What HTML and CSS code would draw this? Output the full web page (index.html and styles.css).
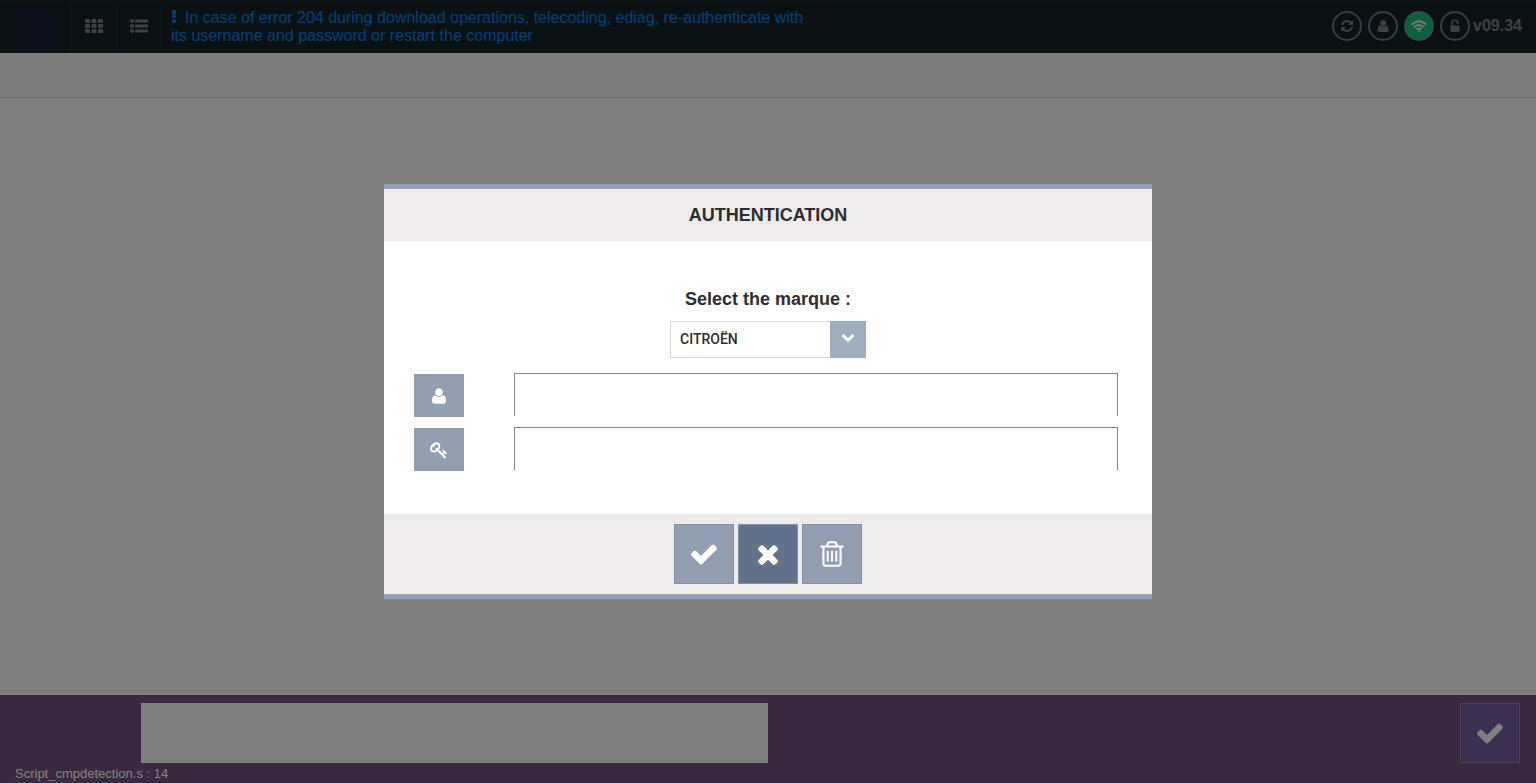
FILE: index.html
```html
<!DOCTYPE html>
<html lang="en">
<head>
<meta charset="utf-8">
<title>Authentication</title>
<link rel="stylesheet" href="styles.css">
</head>
<body>
<svg class="defs" aria-hidden="true">
  <symbol id="check" viewBox="0 0 1792 1792"><path d="M1671 566q0 40-28 68l-724 724-136 136q-28 28-68 28t-68-28l-136-136-362-362q-28-28-28-68t28-68l136-136q28-28 68-28t68 28l294 295 656-657q28-28 68-28t68 28l136 136q28 28 28 68z"/></symbol>
  <symbol id="times" viewBox="0 0 1792 1792"><path d="M1490 1322q0 40-28 68l-136 136q-28 28-68 28t-68-28l-294-294-294 294q-28 28-68 28t-68-28l-136-136q-28-28-28-68t28-68l294-294-294-294q-28-28-28-68t28-68l136-136q28-28 68-28t68 28l294 294 294-294q28-28 68-28t68 28l136 136q28 28 28 68t-28 68l-294 294 294 294q28 28 28 68z"/></symbol>
  <symbol id="trash" viewBox="0 0 1792 1792"><path d="M704 736v576q0 14-9 23t-23 9h-64q-14 0-23-9t-9-23v-576q0-14 9-23t23-9h64q14 0 23 9t9 23zm256 0v576q0 14-9 23t-23 9h-64q-14 0-23-9t-9-23v-576q0-14 9-23t23-9h64q14 0 23 9t9 23zm256 0v576q0 14-9 23t-23 9h-64q-14 0-23-9t-9-23v-576q0-14 9-23t23-9h64q14 0 23 9t9 23zm128 724v-948h-896v948q0 22 7 40.500t14.500 27 10.500 8.500h832q3 0 10.500-8.500t14.500-27 7-40.500zm-672-1076h448l-48-117q-7-9-17-11h-317q-10 2-17 11zm928 32v64q0 14-9 23t-23 9h-96v948q0 83-47 143.500t-113 60.500h-832q-66 0-113-58.500t-47-141.500v-952h-96q-14 0-23-9t-9-23v-64q0-14 9-23t23-9h309l70-167q15-37 54-63t79-26h320q40 0 79 26t54 63l70 167h309q14 0 23 9t9 23z"/></symbol>
  <symbol id="refresh" viewBox="0 0 1792 1792"><path d="M1639 1056q0 5-1 7-64 268-268 434.500t-478 166.500q-146 0-282.500-55t-243.500-157l-129 129q-19 19-45 19t-45-19-19-45v-448q0-26 19-45t45-19h448q26 0 45 19t19 45-19 45l-137 137q71 66 161 102t187 36q134 0 250-65t186-179q11-17 53-117 8-23 30-23h192q13 0 22.500 9.500t9.500 22.500zm25-800v448q0 26-19 45t-45 19h-448q-26 0-45-19t-19-45 19-45l138-138q-148-137-349-137-134 0-250 65t-186 179q-11 17-53 117-8 23-30 23h-199q-13 0-22.500-9.500t-9.500-22.500v-7q65-268 270-434.500t480-166.500q146 0 284 55.500t245 156.500l130-129q19-19 45-19t45 19 19 45z"/></symbol>
  <symbol id="user" viewBox="0 0 1792 1792"><path d="M1600 1405q0 120-73 189.500t-194 69.500h-874q-121 0-194-69.500t-73-189.500q0-53 3.500-103.500t14-109 26.500-108.500 43-97.500 62-81 85.500-53.500 111.500-20q9 0 42 21.500t74.500 48 108 48 133.500 21.500 133.500-21.500 108-48 74.500-48 42-21.500q61 0 111.500 20t85.500 53.500 62 81 43 97.500 26.500 108.500 14 109 3.500 103.500zm-320-893q0 159-112.500 271.500t-271.500 112.500-271.500-112.500-112.500-271.500 112.500-271.500 271.500-112.500 271.500 112.500 112.500 271.500z"/></symbol>
  <symbol id="key" viewBox="0 0 1792 1792"><path d="M832 512q0-80-56-136t-136-56-136 56-56 136q0 42 19 83-41-19-83-19-80 0-136 56t-56 136 56 136 136 56 136-56 56-136q0-42-19-83 41 19 83 19 80 0 136-56t56-136zm851 704q0 17-49 66t-66 49q-9 0-28.500-16t-36.500-33-38.500-40-24.500-26l-96 96 220 220q28 28 28 68 0 42-39 81t-81 39q-40 0-68-28l-671-671q-176 131-365 131-163 0-265.500-102.500t-102.500-265.500q0-160 95-313t248-248 313-95q163 0 265.500 102.500t102.500 265.500q0 189-131 365l355 355 96-96q-3-3-26-24.500t-40-38.500-33-36.500-16-28.500q0-17 49-66t66-49q13 0 23 10 6 6 46 44.500t82 79.500 86.500 86 73 78 28.500 41z"/></symbol>
  <symbol id="grid" viewBox="0 0 18 14"><path d="M1 0h3q1 0 1 1v2q0 1-1 1H1q-1 0-1-1V1q0-1 1-1zM7.500 0h3q1 0 1 1v2q0 1-1 1h-3q-1 0-1-1V1q0-1 1-1zM14 0h3q1 0 1 1v2q0 1-1 1h-3q-1 0-1-1V1q0-1 1-1zM1 5h3q1 0 1 1v2q0 1-1 1H1q-1 0-1-1V6q0-1 1-1zM7.500 5h3q1 0 1 1v2q0 1-1 1h-3q-1 0-1-1V6q0-1 1-1zM14 5h3q1 0 1 1v2q0 1-1 1h-3q-1 0-1-1V6q0-1 1-1zM1 10h3q1 0 1 1v2q0 1-1 1H1q-1 0-1-1v-2q0-1 1-1zM7.500 10h3q1 0 1 1v2q0 1-1 1h-3q-1 0-1-1v-2q0-1 1-1zM14 10h3q1 0 1 1v2q0 1-1 1h-3q-1 0-1-1v-2q0-1 1-1z"/></symbol>
  <symbol id="list" viewBox="0 0 18 14"><circle cx="2" cy="2" r="2"/><circle cx="2" cy="7" r="2"/><circle cx="2" cy="12" r="2"/><rect x="5" y="0.500" width="13" height="3" rx="0.500"/><rect x="5" y="5.500" width="13" height="3" rx="0.500"/><rect x="5" y="10.500" width="13" height="3" rx="0.500"/></symbol>
  <symbol id="wifi" viewBox="0 0 18 14"><path d="M1.500 5.800Q9-1.200 16.500 5.800M4 8.300Q9 3.700 14 8.300M6.400 10.600Q9 8.400 11.600 10.600" fill="none" stroke="currentColor" stroke-width="1.900"/><path d="M7.300 11.800Q9 10.600 10.700 11.800L9 13.500z"/></symbol>
  <symbol id="unlock" viewBox="0 0 12 14"><path d="M3 7V4a2.800 2.800 0 0 1 5.600 0v1" fill="none" stroke="currentColor" stroke-width="1.600"/><rect x="1.500" y="6.500" width="9" height="6.500" rx="0.800"/></symbol>
  <symbol id="chevron" viewBox="0 0 14 10"><path d="M1.500 2L7 7.400L12.500 2" fill="none" stroke="currentColor" stroke-width="2.800"/></symbol>
  <symbol id="bang" viewBox="0 0 6 14"><path d="M1 0h4l-.5 8h-3zM1.300 9.500h3.400v3H1.300z"/></symbol>
</svg>
<div class="app">
  <header class="topbar">
    <div class="brand"><span class="brand-mark"></span></div>
    <button class="nav-button" aria-label="Applications"><svg class="icon-nav"><use href="#grid"/></svg></button>
    <button class="nav-button" aria-label="Menu"><svg class="icon-nav"><use href="#list"/></svg></button>
    <p class="notice"><svg class="icon-bang"><use href="#bang"/></svg>In case of error 204 during download operations, telecoding, ediag, re-authenticate with<br>its username and password or restart the computer</p>
    <div class="status">
      <button class="round" aria-label="Refresh"><svg class="icon-round"><use href="#refresh"/></svg></button>
      <button class="round" aria-label="User"><svg class="icon-round"><use href="#user"/></svg></button>
      <button class="round online" aria-label="Network"><svg class="icon-wifi"><use href="#wifi"/></svg></button>
      <button class="round" aria-label="Unlocked"><svg class="icon-round"><use href="#unlock"/></svg></button>
      <span class="version">v09.34</span>
    </div>
  </header>
  <div class="subbar"></div>
  <main class="content"></main>
  <footer class="bottombar">
    <div class="bottom-row">
      <div class="message"></div>
      <button class="confirm" aria-label="Continue"><svg class="icon-large"><use href="#check"/></svg></button>
    </div>
    <div class="script-name">Script_cmpdetection.s : 14</div>
  </footer>
</div>
<div class="overlay">
  <form class="modal" role="dialog" aria-labelledby="modal-title">
    <h1 class="modal-title" id="modal-title">AUTHENTICATION</h1>
    <div class="modal-body">
      <label class="marque-label" for="marque">Select the marque :</label>
      <div class="select-box">
        <select class="marque" id="marque"><option>CITROËN</option></select>
        <span class="select-arrow"><svg class="icon-chevron"><use href="#chevron"/></svg></span>
      </div>
      <div class="fields">
        <div class="field">
          <label class="field-icon" for="login" aria-label="User name"><svg class="icon-field"><use href="#user"/></svg></label>
          <input class="field-input" id="login" type="text">
        </div>
        <div class="field">
          <label class="field-icon" for="password" aria-label="Password"><svg class="icon-field"><use href="#key"/></svg></label>
          <input class="field-input" id="password" type="password">
        </div>
      </div>
    </div>
    <div class="modal-actions">
      <button class="action" type="submit" aria-label="Validate"><svg class="icon-large"><use href="#check"/></svg></button>
      <button class="action action-cancel" type="button" aria-label="Cancel"><svg class="icon-large"><use href="#times"/></svg></button>
      <button class="action" type="reset" aria-label="Clear"><svg class="icon-large"><use href="#trash"/></svg></button>
    </div>
  </form>
</div>
</body>
</html>
```
FILE: styles.css
```css
* { box-sizing: border-box; }
body {
  margin: 0;
  font-family: "Liberation Sans", Arial, sans-serif;
  color: #2e2e30;
}
button { padding: 0; border: 0; background: none; color: inherit; font: inherit; }
svg { display: block; fill: currentColor; }
.defs { position: absolute; width: 0; height: 0; }

.app { display: flex; flex-direction: column; min-height: 100vh; background: #fff; }

.topbar {
  display: flex;
  height: 53px;
  padding-bottom: 1px;
  background: #162227;
  box-shadow: inset 0 1px #1c3036;
  color: #7b7f86;
}
.brand { width: 72px; padding: 9px 16px 0 15px; border-right: 1px solid #1e2b30; }
.brand-mark { display: block; height: 42px; background: #1b2030; }
.nav-button {
  display: flex;
  align-items: center;
  justify-content: center;
  width: 45px;
  border-right: 1px solid #1e2b30;
}
.icon-nav { width: 18px; height: 14px; }
.notice {
  flex: 1;
  margin: 0;
  padding: 9px 0 0 9px;
  font-size: 16px;
  line-height: 18px;
  color: #0080ec;
}
.icon-bang { display: inline-block; width: 6px; height: 14px; margin-right: 8px; vertical-align: -1px; }
.status { display: flex; align-items: center; gap: 6px; padding-right: 14px; }
.round {
  display: flex;
  align-items: center;
  justify-content: center;
  width: 30px;
  height: 30px;
  border: 2px solid #71767e;
  border-radius: 50%;
}
.online { border-color: #4da986; background: #20bd80; color: #e4f4ec; }
.icon-round { width: 14px; height: 14px; }
.icon-wifi { width: 18px; height: 14px; }
.version { margin-left: -3px; font-size: 16px; font-weight: bold; }

.subbar { height: 45px; background: #f9f9f9; border-bottom: 1px solid #dcdcdc; }
.content { flex: 1; }

.bottombar { height: 88px; padding: 8px 16px 0 0; background: #74547e; }
.bottom-row { display: flex; justify-content: space-between; padding-left: 141px; }
.message { width: 45.5%; height: 60px; background: #fff; }
.confirm {
  display: flex;
  align-items: center;
  justify-content: center;
  width: 60px;
  height: 60px;
  border: 1px solid #9484ac;
  background: #7660a0;
  color: #fff;
}
.script-name { margin: 2px 0 0 15px; font-size: 13px; line-height: 18px; color: #fff; }

.overlay {
  position: fixed;
  inset: 0;
  display: flex;
  align-items: center;
  justify-content: center;
  background: rgba(0, 0, 0, 0.5);
}
.modal {
  width: 50%;
  background: #fff;
  border-top: 5px solid #93a1b3;
  border-bottom: 5px solid #93a1b3;
}
.modal-title {
  margin: 0;
  background: #edebec;
  font-size: 18px;
  line-height: 52px;
  text-align: center;
}
.modal-body {
  display: flex;
  flex-direction: column;
  align-items: center;
  padding: 46px 34px 43px 30px;
}
.marque-label { font-size: 18px; font-weight: bold; line-height: 24px; margin-left: 4px; }
.select-box { position: relative; width: 196px; height: 37px; margin: 10px 0 15px 4px; }
.marque {
  appearance: none;
  width: 100%;
  height: 100%;
  padding: 0 44px 2px 9px;
  border: 1px solid #d3d6da;
  border-radius: 0;
  background: #fff;
  color: #2e2e30;
  font: 500 14px Roboto, sans-serif;
}
.select-arrow {
  position: absolute;
  top: 0;
  right: 0;
  display: flex;
  justify-content: center;
  width: 36px;
  height: 100%;
  padding-top: 12px;
  background: #a0adbc;
  color: #fff;
  pointer-events: none;
}
.icon-chevron { width: 14px; height: 10px; }
.fields { display: flex; flex-direction: column; gap: 10px; align-self: stretch; }
.field { display: flex; justify-content: space-between; gap: 50px; }
.field-icon {
  display: flex;
  align-items: center;
  justify-content: center;
  width: 50px;
  height: 43px;
  margin-top: 1px;
  background: #939eb1;
  color: #fff;
}
.icon-field { width: 18px; height: 18px; }
.field-input {
  flex: 1;
  min-width: 0;
  height: 43px;
  padding: 0 10px;
  border: 1px solid #7f858f;
  border-bottom: 0;
  border-radius: 0;
  background: #fff;
  font: 16px "Liberation Sans", Arial, sans-serif;
}
.modal-actions {
  display: flex;
  justify-content: center;
  gap: 4px;
  padding: 10px;
  background: #edebec;
}
.action {
  display: flex;
  align-items: center;
  justify-content: center;
  width: 60px;
  height: 60px;
  border: 1px solid #8391a8;
  background: #939eb3;
  color: #fff;
}
.action-cancel { background: #62728b; }
.icon-large { width: 30px; height: 30px; }
```
